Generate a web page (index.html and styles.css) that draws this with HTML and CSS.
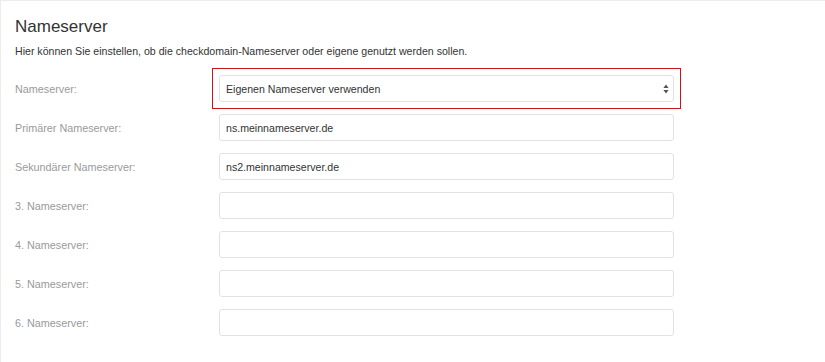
FILE: index.html
```html
<!DOCTYPE html>
<html lang="de">
<head>
<meta charset="utf-8">
<title>Nameserver</title>
<link rel="stylesheet" href="styles.css">
</head>
<body>
<div class="page">
  <h2 class="title">Nameserver</h2>
  <p class="desc">Hier können Sie einstellen, ob die checkdomain-Nameserver oder eigene genutzt werden sollen.</p>
  <form class="form">
    <div class="row">
      <label class="label">Nameserver:</label>
      <div class="select-wrap">
        <select class="field select">
          <option>Eigenen Nameserver verwenden</option>
        </select>
        <svg class="arrows" width="6" height="10" viewBox="0 0 6 10"><path d="M3 0.5 L5.6 4 H0.4 Z M3 9.5 L5.6 6 H0.4 Z" fill="#555"/></svg>
      </div>
    </div>
    <div class="row">
      <label class="label">Primärer Nameserver:</label>
      <input class="field" type="text" value="ns.meinnameserver.de">
    </div>
    <div class="row">
      <label class="label">Sekundärer Nameserver:</label>
      <input class="field" type="text" value="ns2.meinnameserver.de">
    </div>
    <div class="row">
      <label class="label">3. Nameserver:</label>
      <input class="field" type="text" value="">
    </div>
    <div class="row">
      <label class="label">4. Nameserver:</label>
      <input class="field" type="text" value="">
    </div>
    <div class="row">
      <label class="label">5. Nameserver:</label>
      <input class="field" type="text" value="">
    </div>
    <div class="row">
      <label class="label">6. Nameserver:</label>
      <input class="field" type="text" value="">
    </div>
  </form>
</div>
</body>
</html>
```
FILE: styles.css
```css
html, body {
  margin: 0;
  padding: 0;
  background: #fff;
}
.page {
  width: 825px;
  height: 362px;
  box-sizing: border-box;
  border-top: 1px solid #ececec;
  border-left: 1px solid #ececec;
  padding: 15px 0 0 14px;
  font-family: "Liberation Sans", Arial, sans-serif;
  color: #333;
}
.title {
  margin: 0;
  font-size: 17px;
  font-weight: normal;
  line-height: 21px;
  color: #333;
}
.desc {
  margin: 7px 0 0 0;
  font-size: 10.6px;
  line-height: 14px;
  color: #333;
}
.form {
  margin-top: 17px;
  display: flex;
  flex-direction: column;
  gap: 12px;
}
.row {
  display: flex;
  align-items: center;
}
.label {
  width: 204px;
  font-size: 10.8px;
  color: #9a9a9a;
}
.field {
  width: 455px;
  height: 27px;
  box-sizing: border-box;
  border: 1px solid #e2e2e2;
  border-radius: 3px;
  padding: 0 6px;
  font-family: "Liberation Sans", Arial, sans-serif;
  font-size: 10.6px;
  color: #333;
  background: #fff;
  margin: 0;
}
.select-wrap {
  position: relative;
  width: 455px;
  height: 27px;
  outline: 1px solid #c8141c;
  outline-offset: 6px;
}
.select {
  appearance: none;
  -webkit-appearance: none;
  display: block;
  outline: none;
}
.arrows {
  position: absolute;
  right: 5px;
  top: 9px;
}
```
